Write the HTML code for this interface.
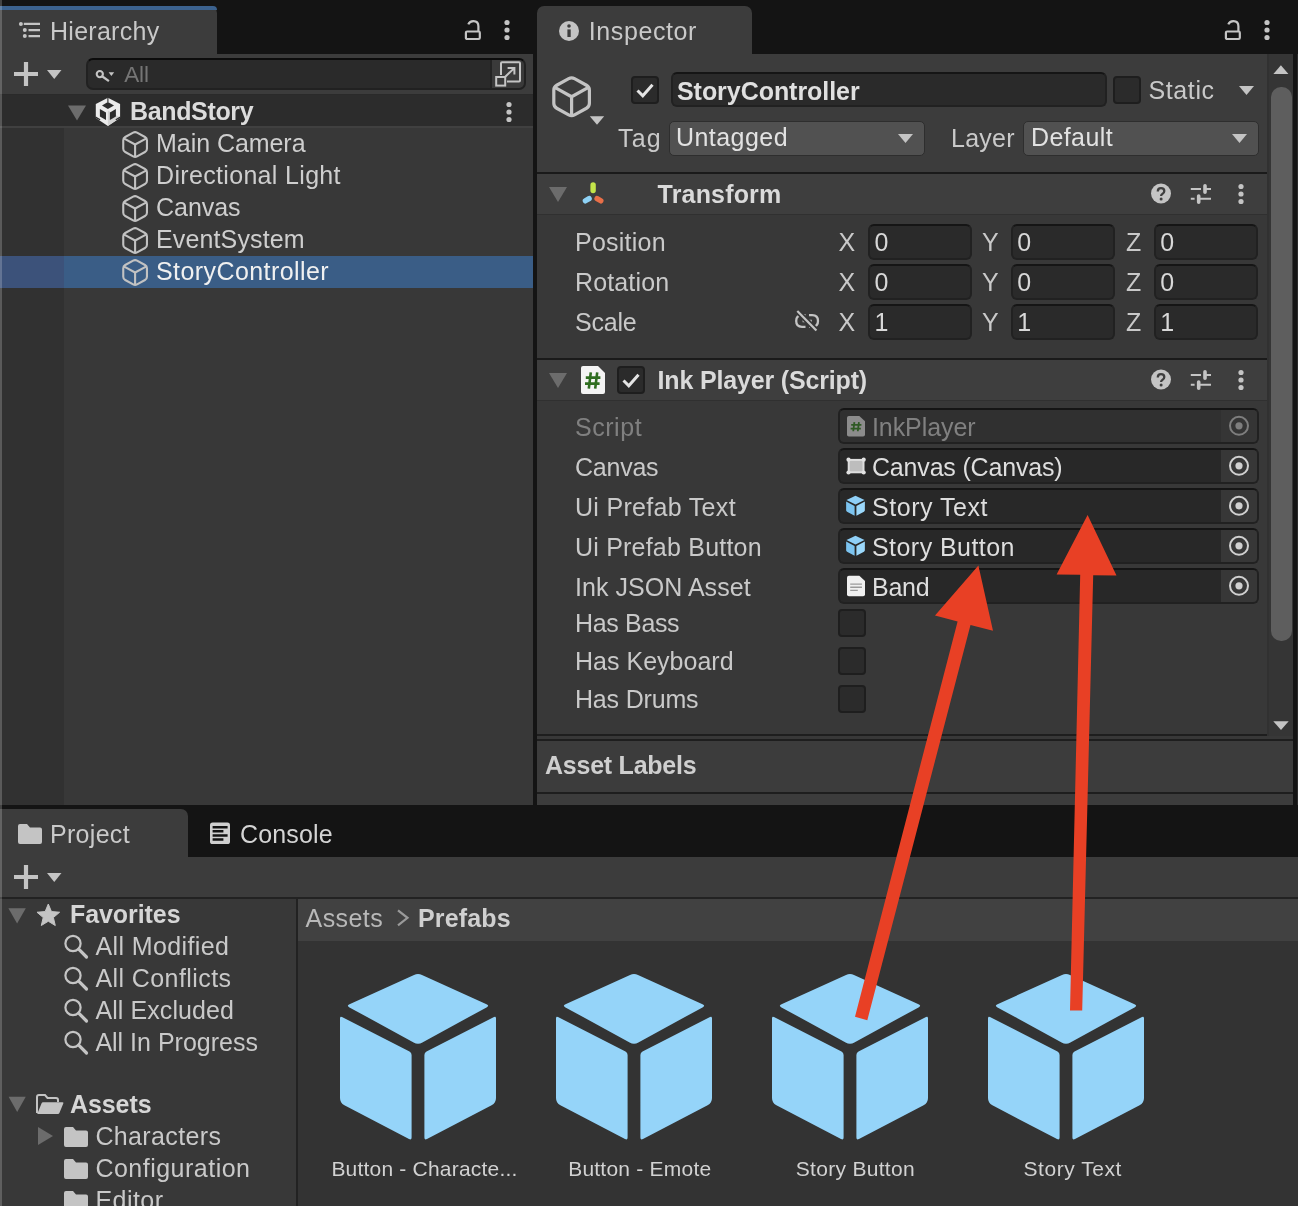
<!DOCTYPE html>
<html><head><meta charset="utf-8"><title>Unity</title>
<style>
html,body{margin:0;padding:0;}
body{width:1298px;height:1206px;overflow:hidden;background:#141414;position:relative;font-family:"Liberation Sans",sans-serif;}
.b{position:absolute;box-sizing:border-box;}
.t{position:absolute;white-space:nowrap;line-height:30px;height:30px;}
svg{overflow:visible;}
#root{position:absolute;left:0;top:0;width:1298px;height:1206px;overflow:hidden;will-change:transform;}
</style></head><body><div id="root">
<div class="b" style="left:0px;top:6px;width:217px;height:50px;background:#3c3c3c;border-top-right-radius:7px;"></div>
<div class="b" style="left:0px;top:6px;width:217px;height:4px;background:#3c628e;border-top-right-radius:7px;"></div>
<svg class="b" style="left:18px;top:21px;" width="23" height="19" viewBox="0 0 23 19"><g transform="translate(0 0)"><circle cx="2.9" cy="2.9" r="2" fill="#c4c4c4"/><circle cx="6.8" cy="9.1" r="2" fill="#c4c4c4"/><circle cx="6.8" cy="15.1" r="2" fill="#c4c4c4"/><path d="M5.8 2.9 H22 M10.5 9.1 H22 M10.5 15.1 H22" stroke="#c4c4c4" stroke-width="2.2"/></g></svg>
<div class="t" style="left:50.0px;top:15.9px;font-size:25px;letter-spacing:0.27px;color:#c9c9c9;">Hierarchy</div>
<svg class="b" style="left:464px;top:19px;" width="18" height="23" viewBox="0 0 18 23"><g transform="translate(0 0.5)"><rect x="1.9" y="12" width="13.9" height="7.5" rx="1.2" fill="none" stroke="#c4c4c4" stroke-width="2.2"/><path d="M4.3 4.9 Q5.6 1.6 9.4 1.6 Q14.4 1.6 14.4 6.8 L14.4 12" fill="none" stroke="#c4c4c4" stroke-width="2.2"/></g></svg>
<svg class="b" style="left:503px;top:18px;" width="8" height="24" viewBox="0 0 8 24"><g transform="translate(0 0.5)"><circle cx="4" cy="4" r="2.6" fill="#c4c4c4"/><circle cx="4" cy="11.5" r="2.6" fill="#c4c4c4"/><circle cx="4" cy="19" r="2.6" fill="#c4c4c4"/></g></svg>
<div class="b" style="left:0px;top:54px;width:533px;height:40px;background:#3c3c3c;"></div>
<div class="b" style="left:0px;top:94px;width:533px;height:1px;background:#2a2a2a;"></div>
<svg class="b" style="left:14px;top:62px;" width="24" height="24" viewBox="0 0 24 24"><g transform="translate(0 0)"><path d="M12 0 V24 M0 12 H24" stroke="#c4c4c4" stroke-width="4.2"/></g></svg>
<svg class="b" style="left:47px;top:70px;" width="15" height="9" viewBox="0 0 15 9"><g transform="translate(0 0)"><path d="M0 0 L14.5 0 L7.25 9 Z" fill="#c4c4c4"/></g></svg>
<div class="b" style="left:86px;top:58px;width:440px;height:32px;background:#2a2a2a;border:2px solid #212121;border-top-color:#0c0c0c;border-radius:7px;"></div>
<div class="b" style="left:490px;top:60px;width:34px;height:28px;background:#3a3a3a;border-left:2px solid #232323;border-radius:0 5px 5px 0;"></div>
<svg class="b" style="left:94px;top:67px;" width="22" height="16" viewBox="0 0 22 16"><g transform="translate(0 0)"><circle cx="5.8" cy="7.1" r="3.1" fill="none" stroke="#c4c4c4" stroke-width="2.1"/><path d="M8.1 9.3 L14.9 14.1" stroke="#c4c4c4" stroke-width="2.3"/><path d="M14.6 5.3 H20.2 L17.4 9 Z" fill="#c4c4c4"/></g></svg>
<div class="t" style="left:124.2px;top:59.8px;font-size:22.5px;letter-spacing:-0.10px;color:#757575;">All</div>
<svg class="b" style="left:495px;top:61px;" width="27" height="26" viewBox="0 0 27 26"><g transform="translate(0 0)"><path d="M6 14 V2.2 Q6 1.2 7 1.2 H24 Q25 1.2 25 2.2 V19.6 Q25 20.6 24 20.6 H12" fill="none" stroke="#c4c4c4" stroke-width="2"/><rect x="1.2" y="16" width="9" height="8.6" fill="none" stroke="#c4c4c4" stroke-width="2"/><path d="M10 16 L19 7.4 M12.6 7 H19.4 V13.6" fill="none" stroke="#c4c4c4" stroke-width="2"/></g></svg>
<div class="b" style="left:0px;top:95px;width:533px;height:31px;background:#2c2c2c;"></div>
<div class="b" style="left:0px;top:126px;width:533px;height:2px;background:#404040;"></div>
<div class="b" style="left:0px;top:128px;width:533px;height:677px;background:#383838;"></div>
<div class="b" style="left:0px;top:128px;width:64px;height:677px;background:#313131;"></div>
<div class="b" style="left:0px;top:256px;width:533px;height:32px;background:#3a5d86;"></div>
<div class="b" style="left:0px;top:256px;width:64px;height:32px;background:#3c527a;"></div>
<svg class="b" style="left:68px;top:105px;" width="18" height="16" viewBox="0 0 18 16"><g transform="translate(0 0.5)"><path d="M0 0 L18 0 L9 15 Z" fill="#6c6c6c"/></g></svg>
<svg class="b" style="left:505px;top:100px;" width="8" height="24" viewBox="0 0 8 24"><g transform="translate(0 0.5)"><circle cx="4" cy="4" r="2.6" fill="#c4c4c4"/><circle cx="4" cy="11.5" r="2.6" fill="#c4c4c4"/><circle cx="4" cy="19" r="2.6" fill="#c4c4c4"/></g></svg>
<svg class="b" style="left:95px;top:97px;" width="26" height="30" viewBox="0 0 26 30"><g transform="translate(0.5 0.5)"><path d="M12.4 0.3 L24.6 6.6 V20.5 L12.4 28.5 L0.3 20.5 V6.6 Z" fill="#ececec"/><path d="M12.4 13 L24.6 19.9 L12.4 28.5 Z" fill="#d4d4d4"/><path d="M12.4 4.4 L18.5 7.9 L12.4 11.5 L6.5 7.9 Z" fill="#2c2c2c"/><path d="M4.4 11.6 L10.5 15.1 V22.6 L4.4 19 Z" fill="#2c2c2c"/><path d="M20.4 11.6 L14.4 15.1 V22.6 L20.4 19 Z" fill="#2c2c2c"/><path d="M12.4 0 V4.6" stroke="#2c2c2c" stroke-width="1.1"/><path d="M0 19.6 L4.6 22.3 M24.9 19.6 L20.3 22.3" stroke="#2c2c2c" stroke-width="1.3"/></g></svg>
<div class="t" style="left:130.0px;top:95.9px;font-size:25px;font-weight:bold;letter-spacing:-0.35px;color:#dcdcdc;">BandStory</div>
<svg class="b" style="left:122px;top:130px;" width="27" height="29" viewBox="0 0 27 29"><g transform="translate(0 0.3)"><path d="M11.15 2.32 Q13.10 1.25 15.05 2.32 L23.00 6.66 Q24.95 7.72 24.95 9.95 L24.95 18.45 Q24.95 20.67 23.00 21.74 L15.05 26.08 Q13.10 27.15 11.15 26.08 L3.20 21.74 Q1.25 20.67 1.25 18.45 L1.25 9.95 Q1.25 7.72 3.20 6.66 Z M1.75 8.025 L13.1 14.2 L24.45 8.025 M13.1 14.2 L13.1 26.85" fill="none" stroke="#c2c2c2" stroke-width="2.1" stroke-linejoin="round"/></g></svg>
<div class="t" style="left:156.0px;top:128.3px;font-size:25px;letter-spacing:-0.05px;color:#cecece;">Main Camera</div>
<svg class="b" style="left:122px;top:162px;" width="27" height="29" viewBox="0 0 27 29"><g transform="translate(0 0.3)"><path d="M11.15 2.32 Q13.10 1.25 15.05 2.32 L23.00 6.66 Q24.95 7.72 24.95 9.95 L24.95 18.45 Q24.95 20.67 23.00 21.74 L15.05 26.08 Q13.10 27.15 11.15 26.08 L3.20 21.74 Q1.25 20.67 1.25 18.45 L1.25 9.95 Q1.25 7.72 3.20 6.66 Z M1.75 8.025 L13.1 14.2 L24.45 8.025 M13.1 14.2 L13.1 26.85" fill="none" stroke="#c2c2c2" stroke-width="2.1" stroke-linejoin="round"/></g></svg>
<div class="t" style="left:156.0px;top:160.3px;font-size:25px;letter-spacing:0.33px;color:#cecece;">Directional Light</div>
<svg class="b" style="left:122px;top:194px;" width="27" height="29" viewBox="0 0 27 29"><g transform="translate(0 0.3)"><path d="M11.15 2.32 Q13.10 1.25 15.05 2.32 L23.00 6.66 Q24.95 7.72 24.95 9.95 L24.95 18.45 Q24.95 20.67 23.00 21.74 L15.05 26.08 Q13.10 27.15 11.15 26.08 L3.20 21.74 Q1.25 20.67 1.25 18.45 L1.25 9.95 Q1.25 7.72 3.20 6.66 Z M1.75 8.025 L13.1 14.2 L24.45 8.025 M13.1 14.2 L13.1 26.85" fill="none" stroke="#c2c2c2" stroke-width="2.1" stroke-linejoin="round"/></g></svg>
<div class="t" style="left:156.0px;top:192.3px;font-size:25px;letter-spacing:-0.03px;color:#cecece;">Canvas</div>
<svg class="b" style="left:122px;top:226px;" width="27" height="29" viewBox="0 0 27 29"><g transform="translate(0 0.3)"><path d="M11.15 2.32 Q13.10 1.25 15.05 2.32 L23.00 6.66 Q24.95 7.72 24.95 9.95 L24.95 18.45 Q24.95 20.67 23.00 21.74 L15.05 26.08 Q13.10 27.15 11.15 26.08 L3.20 21.74 Q1.25 20.67 1.25 18.45 L1.25 9.95 Q1.25 7.72 3.20 6.66 Z M1.75 8.025 L13.1 14.2 L24.45 8.025 M13.1 14.2 L13.1 26.85" fill="none" stroke="#c2c2c2" stroke-width="2.1" stroke-linejoin="round"/></g></svg>
<div class="t" style="left:156.0px;top:224.3px;font-size:25px;letter-spacing:0.13px;color:#cecece;">EventSystem</div>
<svg class="b" style="left:122px;top:258px;" width="27" height="29" viewBox="0 0 27 29"><g transform="translate(0 0.3)"><path d="M11.15 2.32 Q13.10 1.25 15.05 2.32 L23.00 6.66 Q24.95 7.72 24.95 9.95 L24.95 18.45 Q24.95 20.67 23.00 21.74 L15.05 26.08 Q13.10 27.15 11.15 26.08 L3.20 21.74 Q1.25 20.67 1.25 18.45 L1.25 9.95 Q1.25 7.72 3.20 6.66 Z M1.75 8.025 L13.1 14.2 L24.45 8.025 M13.1 14.2 L13.1 26.85" fill="none" stroke="#c2c2c2" stroke-width="2.1" stroke-linejoin="round"/></g></svg>
<div class="t" style="left:156.0px;top:256.3px;font-size:25px;letter-spacing:0.42px;color:#f0f0f0;">StoryController</div>
<div class="b" style="left:537px;top:6px;width:215px;height:50px;background:#3c3c3c;border-top-left-radius:7px;border-top-right-radius:7px;"></div>
<svg class="b" style="left:559px;top:21px;" width="20" height="20" viewBox="0 0 20 20"><g transform="translate(0 0)"><circle cx="10" cy="10" r="10" fill="#c4c4c4"/><circle cx="10" cy="5" r="1.8" fill="#3c3c3c"/><rect x="8.4" y="8.4" width="3.3" height="7.6" fill="#3c3c3c"/></g></svg>
<div class="t" style="left:588.8px;top:15.9px;font-size:25px;letter-spacing:0.59px;color:#c9c9c9;">Inspector</div>
<svg class="b" style="left:1224px;top:19px;" width="18" height="23" viewBox="0 0 18 23"><g transform="translate(0 0.5)"><rect x="1.9" y="12" width="13.9" height="7.5" rx="1.2" fill="none" stroke="#c4c4c4" stroke-width="2.2"/><path d="M4.3 4.9 Q5.6 1.6 9.4 1.6 Q14.4 1.6 14.4 6.8 L14.4 12" fill="none" stroke="#c4c4c4" stroke-width="2.2"/></g></svg>
<svg class="b" style="left:1263px;top:18px;" width="8" height="24" viewBox="0 0 8 24"><g transform="translate(0 0.5)"><circle cx="4" cy="4" r="2.6" fill="#c4c4c4"/><circle cx="4" cy="11.5" r="2.6" fill="#c4c4c4"/><circle cx="4" cy="19" r="2.6" fill="#c4c4c4"/></g></svg>
<div class="b" style="left:537px;top:54px;width:756px;height:751px;background:#3c3c3c;"></div>
<div class="b" style="left:1267px;top:54px;width:26px;height:682px;background:#353535;"></div>
<div class="b" style="left:1267px;top:54px;width:2px;height:682px;background:#313131;"></div>
<div class="b" style="left:1297px;top:54px;width:1px;height:751px;background:#2b2b2b;"></div>
<svg class="b" style="left:1273px;top:65px;" width="16" height="10" viewBox="0 0 16 10"><g transform="translate(0.4 0.2)"><path d="M0 8.8 L15 8.8 L7.5 0 Z" fill="#c4c4c4"/></g></svg>
<div class="b" style="left:1271px;top:87px;width:21px;height:554px;background:#5e5e5e;border-radius:10px;"></div>
<svg class="b" style="left:1273px;top:721px;" width="16" height="10" viewBox="0 0 16 10"><g transform="translate(0.3 0.2)"><path d="M0 0 L15.4 0 L7.7 8.8 Z" fill="#c4c4c4"/></g></svg>
<svg class="b" style="left:552px;top:75px;" width="40" height="44" viewBox="0 0 40 44"><g transform="translate(0 0.2)"><path d="M16.69 3.42 Q19.60 1.80 22.51 3.42 L34.49 10.06 Q37.40 11.68 37.40 15.01 L37.40 28.09 Q37.40 31.43 34.49 33.04 L22.51 39.68 Q19.60 41.30 16.69 39.68 L4.71 33.04 Q1.80 31.43 1.80 28.09 L1.80 15.01 Q1.80 11.68 4.71 10.06 Z M2.3 11.975 L19.6 21.55 L36.9 11.975 M19.6 21.55 L19.6 41" fill="none" stroke="#c4c4c4" stroke-width="3.2" stroke-linejoin="round"/></g></svg>
<svg class="b" style="left:589px;top:116px;" width="16" height="9" viewBox="0 0 16 9"><g transform="translate(0.8 0.2)"><path d="M0 0 L14.4 0 L7.2 8.6 Z" fill="#c4c4c4"/></g></svg>
<div class="b" style="left:631px;top:76px;width:28px;height:28px;background:#2b2b2b;border:2px solid #1e1e1e;border-radius:4px;"></div>
<svg class="b" style="left:631px;top:76px;" width="28" height="28" viewBox="0 0 28 28"><g transform="translate(0 0)"><path d="M6.5 14.5 L11.8 19.8 L21.5 8.8" fill="none" stroke="#e4e4e4" stroke-width="3"/></g></svg>
<div class="b" style="left:671px;top:72.4px;width:436px;height:35px;background:#2a2a2a;border:2px solid #212121;border-top-color:#151515;border-radius:6px;"></div>
<div class="t" style="left:677.0px;top:76.3px;font-size:25px;font-weight:bold;letter-spacing:-0.05px;color:#e0e0e0;">StoryController</div>
<div class="b" style="left:1113px;top:76px;width:28px;height:28px;background:#2b2b2b;border:2px solid #1e1e1e;border-radius:4px;"></div>
<div class="t" style="left:1148.5px;top:75.3px;font-size:25px;letter-spacing:0.61px;color:#c9c9c9;">Static</div>
<svg class="b" style="left:1239px;top:86px;" width="15" height="9" viewBox="0 0 15 9"><g transform="translate(0 0)"><path d="M0 0 L15 0 L7.5 9 Z" fill="#c4c4c4"/></g></svg>
<div class="t" style="left:618.0px;top:123.3px;font-size:25px;letter-spacing:1.14px;color:#c9c9c9;">Tag</div>
<div class="b" style="left:669px;top:120.5px;width:256px;height:35.2px;background:#515151;border:1.5px solid #2e2e2e;border-radius:5px;"></div>
<svg class="b" style="left:898px;top:134px;" width="15" height="10" viewBox="0 0 15 10"><g transform="translate(0 0.1)"><path d="M0 0 L15 0 L7.5 9 Z" fill="#c4c4c4"/></g></svg>
<div class="t" style="left:676.0px;top:122.3px;font-size:25px;letter-spacing:0.45px;color:#e2e2e2;">Untagged</div>
<div class="t" style="left:951.0px;top:123.3px;font-size:25px;letter-spacing:0.26px;color:#c9c9c9;">Layer</div>
<div class="b" style="left:1023px;top:120.5px;width:236px;height:35.2px;background:#515151;border:1.5px solid #2e2e2e;border-radius:5px;"></div>
<svg class="b" style="left:1232px;top:134px;" width="15" height="10" viewBox="0 0 15 10"><g transform="translate(0 0.1)"><path d="M0 0 L15 0 L7.5 9 Z" fill="#c4c4c4"/></g></svg>
<div class="t" style="left:1031.0px;top:122.3px;font-size:25px;letter-spacing:0.40px;color:#e2e2e2;">Default</div>
<div class="b" style="left:537px;top:174px;width:730px;height:562px;background:#383838;"></div>
<div class="b" style="left:537px;top:172px;width:730px;height:2px;background:#1a1a1a;"></div>
<div class="b" style="left:537px;top:174px;width:730px;height:40px;background:#3e3e3e;"></div>
<div class="b" style="left:537px;top:214px;width:730px;height:1px;background:#303030;"></div>
<svg class="b" style="left:549px;top:187px;" width="18" height="15" viewBox="0 0 18 15"><g transform="translate(0 0)"><path d="M0 0 L18 0 L9 15 Z" fill="#6c6c6c"/></g></svg>
<div class="t" style="left:657.6px;top:179.3px;font-size:25px;font-weight:bold;letter-spacing:0.17px;color:#dadada;">Transform</div>
<svg class="b" style="left:1151px;top:183px;" width="20" height="21" viewBox="0 0 20 21"><g transform="translate(0 0.5)"><circle cx="10" cy="10" r="10" fill="#c4c4c4"/><path d="M6.8 7.9 Q6.8 4.6 10 4.6 Q13.3 4.6 13.3 7.6 Q13.3 9.3 11.6 10.2 Q10.1 11 10.1 12.6" fill="none" stroke="#3e3e3e" stroke-width="2.3"/><circle cx="10.1" cy="15.6" r="1.5" fill="#3e3e3e"/></g></svg>
<svg class="b" style="left:1190px;top:184px;" width="22" height="20" viewBox="0 0 22 20"><g transform="translate(0 0)"><path d="M0.8 5 H11 M15 5 H21 M0.8 14.8 H4.6 M8.7 14.8 H21" stroke="#c4c4c4" stroke-width="2" fill="none"/><path d="M15 1.8 V8.2 M8.7 12 V18.2" stroke="#c4c4c4" stroke-width="3.6" stroke-linecap="round" fill="none"/></g></svg>
<svg class="b" style="left:1237px;top:182px;" width="8" height="24" viewBox="0 0 8 24"><g transform="translate(0 0.5)"><circle cx="4" cy="4" r="2.6" fill="#c4c4c4"/><circle cx="4" cy="11.5" r="2.6" fill="#c4c4c4"/><circle cx="4" cy="19" r="2.6" fill="#c4c4c4"/></g></svg>
<svg class="b" style="left:580px;top:181px;" width="28" height="26" viewBox="0 0 28 26"><g transform="translate(0 0)"><path d="M13.1 3.9 V9.6" stroke="#c3e44a" stroke-width="5.4" stroke-linecap="round"/><path d="M9.1 17.6 L5.4 19.8" stroke="#8ed2f6" stroke-width="5.4" stroke-linecap="round"/><path d="M17.1 17.6 L20.8 19.8" stroke="#e96f48" stroke-width="5.4" stroke-linecap="round"/></g></svg>
<div class="t" style="left:575.0px;top:227.3px;font-size:25px;letter-spacing:0.24px;color:#c9c9c9;">Position</div>
<div class="t" style="left:838.5px;top:227.3px;font-size:25px;color:#c9c9c9;">X</div>
<div class="b" style="left:868px;top:224px;width:104px;height:36px;background:#2a2a2a;border:2px solid #212121;border-top-color:#151515;border-radius:6px;"></div>
<div class="t" style="left:874.5px;top:227.3px;font-size:25px;color:#d8d8d8;">0</div>
<div class="t" style="left:982.0px;top:227.3px;font-size:25px;color:#c9c9c9;">Y</div>
<div class="b" style="left:1010.8px;top:224px;width:104px;height:36px;background:#2a2a2a;border:2px solid #212121;border-top-color:#151515;border-radius:6px;"></div>
<div class="t" style="left:1017.3px;top:227.3px;font-size:25px;color:#d8d8d8;">0</div>
<div class="t" style="left:1126.0px;top:227.3px;font-size:25px;color:#c9c9c9;">Z</div>
<div class="b" style="left:1153.8px;top:224px;width:104px;height:36px;background:#2a2a2a;border:2px solid #212121;border-top-color:#151515;border-radius:6px;"></div>
<div class="t" style="left:1160.3px;top:227.3px;font-size:25px;color:#d8d8d8;">0</div>
<div class="t" style="left:575.0px;top:267.3px;font-size:25px;letter-spacing:0.14px;color:#c9c9c9;">Rotation</div>
<div class="t" style="left:838.5px;top:267.3px;font-size:25px;color:#c9c9c9;">X</div>
<div class="b" style="left:868px;top:264px;width:104px;height:36px;background:#2a2a2a;border:2px solid #212121;border-top-color:#151515;border-radius:6px;"></div>
<div class="t" style="left:874.5px;top:267.3px;font-size:25px;color:#d8d8d8;">0</div>
<div class="t" style="left:982.0px;top:267.3px;font-size:25px;color:#c9c9c9;">Y</div>
<div class="b" style="left:1010.8px;top:264px;width:104px;height:36px;background:#2a2a2a;border:2px solid #212121;border-top-color:#151515;border-radius:6px;"></div>
<div class="t" style="left:1017.3px;top:267.3px;font-size:25px;color:#d8d8d8;">0</div>
<div class="t" style="left:1126.0px;top:267.3px;font-size:25px;color:#c9c9c9;">Z</div>
<div class="b" style="left:1153.8px;top:264px;width:104px;height:36px;background:#2a2a2a;border:2px solid #212121;border-top-color:#151515;border-radius:6px;"></div>
<div class="t" style="left:1160.3px;top:267.3px;font-size:25px;color:#d8d8d8;">0</div>
<div class="t" style="left:575.0px;top:307.3px;font-size:25px;letter-spacing:-0.23px;color:#c9c9c9;">Scale</div>
<div class="t" style="left:838.5px;top:307.3px;font-size:25px;color:#c9c9c9;">X</div>
<div class="b" style="left:868px;top:304px;width:104px;height:36px;background:#2a2a2a;border:2px solid #212121;border-top-color:#151515;border-radius:6px;"></div>
<div class="t" style="left:874.5px;top:307.3px;font-size:25px;color:#d8d8d8;">1</div>
<div class="t" style="left:982.0px;top:307.3px;font-size:25px;color:#c9c9c9;">Y</div>
<div class="b" style="left:1010.8px;top:304px;width:104px;height:36px;background:#2a2a2a;border:2px solid #212121;border-top-color:#151515;border-radius:6px;"></div>
<div class="t" style="left:1017.3px;top:307.3px;font-size:25px;color:#d8d8d8;">1</div>
<div class="t" style="left:1126.0px;top:307.3px;font-size:25px;color:#c9c9c9;">Z</div>
<div class="b" style="left:1153.8px;top:304px;width:104px;height:36px;background:#2a2a2a;border:2px solid #212121;border-top-color:#151515;border-radius:6px;"></div>
<div class="t" style="left:1160.3px;top:307.3px;font-size:25px;color:#d8d8d8;">1</div>
<svg class="b" style="left:794px;top:310px;" width="27" height="24" viewBox="0 0 27 24"><g transform="translate(0 0)"><path d="M11.5 5.2 H8 Q2.2 5.2 2.2 11 Q2.2 16.8 8 16.8 H11.5 M15 5.2 H18.2 Q24 5.2 24 11 Q24 16.8 18.2 16.8 H15 M8.6 11 H17.8" fill="none" stroke="#c4c4c4" stroke-width="2.3"/><path d="M3.3 1 L22.4 20.5" stroke="#383838" stroke-width="5.4"/><path d="M3.3 1 L22.4 20.5" stroke="#c4c4c4" stroke-width="2.2"/></g></svg>
<div class="b" style="left:537px;top:358px;width:730px;height:2px;background:#1a1a1a;"></div>
<div class="b" style="left:537px;top:360px;width:730px;height:40px;background:#3e3e3e;"></div>
<div class="b" style="left:537px;top:400px;width:730px;height:1px;background:#303030;"></div>
<svg class="b" style="left:549px;top:373px;" width="18" height="15" viewBox="0 0 18 15"><g transform="translate(0 0)"><path d="M0 0 L18 0 L9 15 Z" fill="#6c6c6c"/></g></svg>
<div class="t" style="left:657.6px;top:365.3px;font-size:25px;font-weight:bold;letter-spacing:-0.17px;color:#dadada;">Ink Player (Script)</div>
<svg class="b" style="left:1151px;top:369px;" width="20" height="21" viewBox="0 0 20 21"><g transform="translate(0 0.5)"><circle cx="10" cy="10" r="10" fill="#c4c4c4"/><path d="M6.8 7.9 Q6.8 4.6 10 4.6 Q13.3 4.6 13.3 7.6 Q13.3 9.3 11.6 10.2 Q10.1 11 10.1 12.6" fill="none" stroke="#3e3e3e" stroke-width="2.3"/><circle cx="10.1" cy="15.6" r="1.5" fill="#3e3e3e"/></g></svg>
<svg class="b" style="left:1190px;top:370px;" width="22" height="20" viewBox="0 0 22 20"><g transform="translate(0 0)"><path d="M0.8 5 H11 M15 5 H21 M0.8 14.8 H4.6 M8.7 14.8 H21" stroke="#c4c4c4" stroke-width="2" fill="none"/><path d="M15 1.8 V8.2 M8.7 12 V18.2" stroke="#c4c4c4" stroke-width="3.6" stroke-linecap="round" fill="none"/></g></svg>
<svg class="b" style="left:1237px;top:368px;" width="8" height="24" viewBox="0 0 8 24"><g transform="translate(0 0.5)"><circle cx="4" cy="4" r="2.6" fill="#c4c4c4"/><circle cx="4" cy="11.5" r="2.6" fill="#c4c4c4"/><circle cx="4" cy="19" r="2.6" fill="#c4c4c4"/></g></svg>
<svg class="b" style="left:581px;top:366px;" width="24" height="28" viewBox="0 0 24 28"><g transform="translate(0 0)"><path d="M0 2 Q0 0 2 0 H17 L24 7 V26 Q24 28 22 28 H2 Q0 28 0 26 Z" fill="#f4f4f4"/><path d="M9.8 6.4 L7.8 22.6 M16.2 6.4 L14.2 22.6 M4.8 11.6 H19.4 M4 17.6 H18.6" stroke="#2f6d20" stroke-width="2.6" fill="none"/></g></svg>
<div class="b" style="left:617px;top:366px;width:28px;height:28px;background:#2b2b2b;border:2px solid #1e1e1e;border-radius:4px;"></div>
<svg class="b" style="left:617px;top:366px;" width="28" height="28" viewBox="0 0 28 28"><g transform="translate(0 0)"><path d="M6.5 14.5 L11.8 19.8 L21.5 8.8" fill="none" stroke="#e4e4e4" stroke-width="3"/></g></svg>
<div class="t" style="left:575.0px;top:411.6px;font-size:25px;letter-spacing:0.54px;color:#808080;">Script</div>
<div class="b" style="left:838px;top:408.3px;width:421px;height:36px;background:#303030;border:2px solid #212121;border-top-color:#151515;border-radius:6px;"></div>
<div class="b" style="left:1221px;top:410.3px;width:36px;height:32px;background:#353535;border-radius:0 4px 4px 0;"></div>
<svg class="b" style="left:1228px;top:414px;" width="22" height="23" viewBox="0 0 22 23"><g transform="translate(0 0.8)"><circle cx="11" cy="11" r="9" fill="none" stroke="#7e7e7e" stroke-width="2"/><circle cx="11" cy="11" r="3.6" fill="#7e7e7e"/></g></svg>
<div class="t" style="left:872.0px;top:411.6px;font-size:25px;letter-spacing:-0.08px;color:#808080;">InkPlayer</div>
<div class="t" style="left:575.0px;top:451.6px;font-size:25px;letter-spacing:-0.23px;color:#c9c9c9;">Canvas</div>
<div class="b" style="left:838px;top:448.3px;width:421px;height:36px;background:#282828;border:2px solid #212121;border-top-color:#151515;border-radius:6px;"></div>
<div class="b" style="left:1221px;top:450.3px;width:36px;height:32px;background:#373737;border-radius:0 4px 4px 0;"></div>
<svg class="b" style="left:1228px;top:454px;" width="22" height="23" viewBox="0 0 22 23"><g transform="translate(0 0.8)"><circle cx="11" cy="11" r="9" fill="none" stroke="#d0d0d0" stroke-width="2"/><circle cx="11" cy="11" r="3.6" fill="#d0d0d0"/></g></svg>
<div class="t" style="left:872.0px;top:451.6px;font-size:25px;letter-spacing:-0.18px;color:#dedede;">Canvas (Canvas)</div>
<div class="t" style="left:575.0px;top:491.6px;font-size:25px;letter-spacing:0.31px;color:#c9c9c9;">Ui Prefab Text</div>
<div class="b" style="left:838px;top:488.3px;width:421px;height:36px;background:#282828;border:2px solid #212121;border-top-color:#151515;border-radius:6px;"></div>
<div class="b" style="left:1221px;top:490.3px;width:36px;height:32px;background:#373737;border-radius:0 4px 4px 0;"></div>
<svg class="b" style="left:1228px;top:494px;" width="22" height="23" viewBox="0 0 22 23"><g transform="translate(0 0.8)"><circle cx="11" cy="11" r="9" fill="none" stroke="#d0d0d0" stroke-width="2"/><circle cx="11" cy="11" r="3.6" fill="#d0d0d0"/></g></svg>
<div class="t" style="left:872.0px;top:491.6px;font-size:25px;letter-spacing:0.54px;color:#dedede;">Story Text</div>
<div class="t" style="left:575.0px;top:531.6px;font-size:25px;letter-spacing:0.21px;color:#c9c9c9;">Ui Prefab Button</div>
<div class="b" style="left:838px;top:528.3px;width:421px;height:36px;background:#282828;border:2px solid #212121;border-top-color:#151515;border-radius:6px;"></div>
<div class="b" style="left:1221px;top:530.3px;width:36px;height:32px;background:#373737;border-radius:0 4px 4px 0;"></div>
<svg class="b" style="left:1228px;top:534px;" width="22" height="23" viewBox="0 0 22 23"><g transform="translate(0 0.8)"><circle cx="11" cy="11" r="9" fill="none" stroke="#d0d0d0" stroke-width="2"/><circle cx="11" cy="11" r="3.6" fill="#d0d0d0"/></g></svg>
<div class="t" style="left:872.0px;top:531.6px;font-size:25px;letter-spacing:0.45px;color:#dedede;">Story Button</div>
<div class="t" style="left:575.0px;top:571.6px;font-size:25px;letter-spacing:0.04px;color:#c9c9c9;">Ink JSON Asset</div>
<div class="b" style="left:838px;top:568.3px;width:421px;height:36px;background:#282828;border:2px solid #212121;border-top-color:#151515;border-radius:6px;"></div>
<div class="b" style="left:1221px;top:570.3px;width:36px;height:32px;background:#373737;border-radius:0 4px 4px 0;"></div>
<svg class="b" style="left:1228px;top:574px;" width="22" height="23" viewBox="0 0 22 23"><g transform="translate(0 0.8)"><circle cx="11" cy="11" r="9" fill="none" stroke="#d0d0d0" stroke-width="2"/><circle cx="11" cy="11" r="3.6" fill="#d0d0d0"/></g></svg>
<div class="t" style="left:872.0px;top:571.6px;font-size:25px;letter-spacing:-0.26px;color:#dedede;">Band</div>
<svg class="b" style="left:847px;top:416px;" width="18" height="21" viewBox="0 0 18 21"><g transform="translate(0 0) scale(0.94737 0.88696)"><path d="M0 2 Q0 0 2 0 H13 L19 6 V21 Q19 23 17 23 H2 Q0 23 0 21 Z" fill="#8c8c8c"/><path d="M7.8 6.8 L6.6 17.2 M12.6 6.8 L11.4 17.2 M4.4 10 H15.2 M3.8 14.2 H14.6" stroke="#2f5a24" stroke-width="1.9" fill="none"/></g></svg>
<svg class="b" style="left:845px;top:455px;" width="23" height="22" viewBox="0 0 23 22"><g transform="translate(0 0.3)"><rect x="3.7" y="4.6" width="14.8" height="12.4" fill="#bdbdbd" stroke="#dedede" stroke-width="2"/><circle cx="3.5" cy="4.4" r="2.1" fill="#e2e2e2"/><circle cx="18.7" cy="4.4" r="2.1" fill="#e2e2e2"/><circle cx="3.5" cy="17.2" r="2.1" fill="#e2e2e2"/><circle cx="18.7" cy="17.2" r="2.1" fill="#e2e2e2"/></g></svg>
<svg class="b" style="left:845px;top:495px;" width="21" height="22" viewBox="0 0 21 22"><g transform="translate(0.6 0.2) scale(0.9 0.91304)"><path d="M11 0.5 L21 5.3 L11 10.3 L1 5.3 Z" fill="#8fd0f8"/><path d="M0.6 7 L10 11.8 V22.4 L1.6 18.2 Q0.6 17.7 0.6 16.6 Z" fill="#7cc4f0"/><path d="M21.4 7 L12 11.8 V22.4 L20.4 18.2 Q21.4 17.7 21.4 16.6 Z" fill="#9bd8fb"/></g></svg>
<svg class="b" style="left:845px;top:535px;" width="21" height="22" viewBox="0 0 21 22"><g transform="translate(0.6 0.2) scale(0.9 0.91304)"><path d="M11 0.5 L21 5.3 L11 10.3 L1 5.3 Z" fill="#8fd0f8"/><path d="M0.6 7 L10 11.8 V22.4 L1.6 18.2 Q0.6 17.7 0.6 16.6 Z" fill="#7cc4f0"/><path d="M21.4 7 L12 11.8 V22.4 L20.4 18.2 Q21.4 17.7 21.4 16.6 Z" fill="#9bd8fb"/></g></svg>
<svg class="b" style="left:847px;top:575px;" width="18" height="22" viewBox="0 0 18 22"><g transform="translate(0 0.8) scale(0.94737 0.88696)"><path d="M0 2 Q0 0 2 0 H13 L19 6 V21 Q19 23 17 23 H2 Q0 23 0 21 Z" fill="#f0f0f0"/><path d="M3.4 9.4 H15.8 M3.4 12.9 H15.8 M3.4 16.4 H11.4" stroke="#9a9a9a" stroke-width="1.5" fill="none"/></g></svg>
<div class="t" style="left:575.0px;top:608.3px;font-size:25px;letter-spacing:-0.34px;color:#c9c9c9;">Has Bass</div>
<div class="b" style="left:838px;top:609px;width:28px;height:28px;background:#2b2b2b;border:2px solid #1e1e1e;border-radius:4px;"></div>
<div class="t" style="left:575.0px;top:646.3px;font-size:25px;letter-spacing:0.01px;color:#c9c9c9;">Has Keyboard</div>
<div class="b" style="left:838px;top:647px;width:28px;height:28px;background:#2b2b2b;border:2px solid #1e1e1e;border-radius:4px;"></div>
<div class="t" style="left:575.0px;top:684.3px;font-size:25px;letter-spacing:-0.18px;color:#c9c9c9;">Has Drums</div>
<div class="b" style="left:838px;top:685px;width:28px;height:28px;background:#2b2b2b;border:2px solid #1e1e1e;border-radius:4px;"></div>
<div class="b" style="left:537px;top:734px;width:730px;height:2px;background:#1e1e1e;"></div>
<div class="b" style="left:537px;top:736px;width:756px;height:3px;background:#383838;"></div>
<div class="b" style="left:537px;top:738.5px;width:756px;height:2px;background:#1e1e1e;"></div>
<div class="b" style="left:537px;top:740.5px;width:756px;height:51px;background:#3c3c3c;"></div>
<div class="b" style="left:537px;top:791.5px;width:756px;height:2px;background:#1e1e1e;"></div>
<div class="b" style="left:537px;top:793.5px;width:756px;height:11.5px;background:#3c3c3c;"></div>
<div class="t" style="left:545.0px;top:750.3px;font-size:25px;font-weight:bold;letter-spacing:-0.24px;color:#cfcfcf;">Asset Labels</div>
<div class="b" style="left:0px;top:808.5px;width:188px;height:50px;background:#3c3c3c;border-top-right-radius:7px;"></div>
<svg class="b" style="left:18px;top:824px;" width="24" height="20" viewBox="0 0 24 20"><g transform="translate(0 0)"><path d="M0 2 Q0 0 2 0 H9 L12 3.5 H22 Q24 3.5 24 5.5 V18 Q24 20 22 20 H2 Q0 20 0 18 Z" fill="#c4c4c4"/></g></svg>
<div class="t" style="left:50.0px;top:819.0px;font-size:25px;letter-spacing:0.30px;color:#c9c9c9;">Project</div>
<svg class="b" style="left:210px;top:822px;" width="20" height="23" viewBox="0 0 20 23"><g transform="translate(0 0.6)"><rect x="0" y="0" width="20" height="21.4" rx="2.6" fill="#cfcfcf"/><path d="M2.6 4.6 H17.6 M2.6 8.7 H13.4 M2.6 12.8 H17.6 M2.6 16.9 H13.4" stroke="#121212" stroke-width="2.5"/></g></svg>
<div class="t" style="left:240.0px;top:819.0px;font-size:25px;letter-spacing:0.15px;color:#d4d4d4;">Console</div>
<div class="b" style="left:0px;top:857px;width:1298px;height:40px;background:#3c3c3c;"></div>
<svg class="b" style="left:14px;top:865px;" width="24" height="24" viewBox="0 0 24 24"><g transform="translate(0 0)"><path d="M12 0 V24 M0 12 H24" stroke="#c4c4c4" stroke-width="4.2"/></g></svg>
<svg class="b" style="left:47px;top:873px;" width="15" height="9" viewBox="0 0 15 9"><g transform="translate(0 0)"><path d="M0 0 L14.5 0 L7.25 9 Z" fill="#c4c4c4"/></g></svg>
<div class="b" style="left:0px;top:897px;width:1298px;height:2px;background:#222222;"></div>
<div class="b" style="left:0px;top:899px;width:295.7px;height:307px;background:#383838;"></div>
<div class="b" style="left:295.7px;top:899px;width:2.3px;height:307px;background:#222222;"></div>
<div class="b" style="left:298px;top:899px;width:1000px;height:41.5px;background:#414141;"></div>
<div class="b" style="left:298px;top:940.5px;width:1000px;height:266px;background:#333333;"></div>
<div class="t" style="left:305.6px;top:902.9px;font-size:25px;letter-spacing:0.41px;color:#b8b8b8;">Assets</div>
<svg class="b" style="left:396px;top:908px;" width="14" height="20" viewBox="0 0 14 20"><g transform="translate(0 0.3)"><path d="M2 2 L11.5 9.5 L2 17" fill="none" stroke="#9a9a9a" stroke-width="2.2"/></g></svg>
<div class="t" style="left:418.0px;top:902.9px;font-size:25px;font-weight:bold;letter-spacing:0.15px;color:#d0d0d0;">Prefabs</div>
<svg class="b" style="left:8px;top:908px;" width="18" height="16" viewBox="0 0 18 16"><g transform="translate(0.4 0.2)"><path d="M0 0 L17.4 0 L8.7 15.2 Z" fill="#6c6c6c"/></g></svg>
<svg class="b" style="left:36px;top:903px;" width="25" height="25" viewBox="0 0 25 25"><g transform="translate(0.4 0.4)"><polygon points="11.90,0.60 15.05,8.17 23.22,8.82 16.99,14.15 18.89,22.13 11.90,17.86 4.91,22.13 6.81,14.15 0.58,8.82 8.75,8.17" fill="#c4c4c4" stroke="#c4c4c4" stroke-width="1" stroke-linejoin="round"/></g></svg>
<div class="t" style="left:70.0px;top:899.3px;font-size:25px;font-weight:bold;letter-spacing:-0.07px;color:#d6d6d6;">Favorites</div>
<svg class="b" style="left:63px;top:934px;" width="26" height="25" viewBox="0 0 26 25"><g transform="translate(0.5 0)"><circle cx="9.5" cy="9.5" r="7.6" fill="none" stroke="#c4c4c4" stroke-width="2.2"/><path d="M15.2 15.2 L23 23" stroke="#c4c4c4" stroke-width="3.2" stroke-linecap="round"/></g></svg>
<div class="t" style="left:95.4px;top:931.3px;font-size:25px;letter-spacing:0.40px;color:#c9c9c9;">All Modified</div>
<svg class="b" style="left:63px;top:966px;" width="26" height="25" viewBox="0 0 26 25"><g transform="translate(0.5 0)"><circle cx="9.5" cy="9.5" r="7.6" fill="none" stroke="#c4c4c4" stroke-width="2.2"/><path d="M15.2 15.2 L23 23" stroke="#c4c4c4" stroke-width="3.2" stroke-linecap="round"/></g></svg>
<div class="t" style="left:95.4px;top:963.3px;font-size:25px;letter-spacing:0.42px;color:#c9c9c9;">All Conflicts</div>
<svg class="b" style="left:63px;top:998px;" width="26" height="25" viewBox="0 0 26 25"><g transform="translate(0.5 0)"><circle cx="9.5" cy="9.5" r="7.6" fill="none" stroke="#c4c4c4" stroke-width="2.2"/><path d="M15.2 15.2 L23 23" stroke="#c4c4c4" stroke-width="3.2" stroke-linecap="round"/></g></svg>
<div class="t" style="left:95.4px;top:995.3px;font-size:25px;letter-spacing:0.09px;color:#c9c9c9;">All Excluded</div>
<svg class="b" style="left:63px;top:1030px;" width="26" height="25" viewBox="0 0 26 25"><g transform="translate(0.5 0)"><circle cx="9.5" cy="9.5" r="7.6" fill="none" stroke="#c4c4c4" stroke-width="2.2"/><path d="M15.2 15.2 L23 23" stroke="#c4c4c4" stroke-width="3.2" stroke-linecap="round"/></g></svg>
<div class="t" style="left:95.4px;top:1027.3px;font-size:25px;letter-spacing:0.00px;color:#c9c9c9;">All In Progress</div>
<svg class="b" style="left:8px;top:1096px;" width="18" height="16" viewBox="0 0 18 16"><g transform="translate(0.6 0.8)"><path d="M0 0 L17.2 0 L8.6 15.2 Z" fill="#6c6c6c"/></g></svg>
<svg class="b" style="left:36px;top:1094px;" width="28" height="21" viewBox="0 0 28 21"><g transform="translate(0 0)"><path d="M1 19 V3 Q1 1 3 1 H9 L11.5 4 H20 Q22 4 22 6 V8" fill="none" stroke="#c4c4c4" stroke-width="2"/><path d="M1.2 20 L5.6 9.2 Q6 8.2 7 8.2 H26.5 Q27.8 8.2 27.3 9.4 L23.4 19 Q23 20 22 20 Z" fill="#c4c4c4"/></g></svg>
<div class="t" style="left:70.0px;top:1089.3px;font-size:25px;font-weight:bold;letter-spacing:-0.08px;color:#d6d6d6;">Assets</div>
<svg class="b" style="left:38px;top:1127px;" width="15" height="18" viewBox="0 0 15 18"><g transform="translate(0 0)"><path d="M0 0 L15 9 L0 18 Z" fill="#6c6c6c"/></g></svg>
<svg class="b" style="left:64px;top:1127px;" width="24" height="20" viewBox="0 0 24 20"><g transform="translate(0 0)"><path d="M0 2 Q0 0 2 0 H9 L12 3.5 H22 Q24 3.5 24 5.5 V18 Q24 20 22 20 H2 Q0 20 0 18 Z" fill="#c4c4c4"/></g></svg>
<div class="t" style="left:95.4px;top:1121.3px;font-size:25px;letter-spacing:0.37px;color:#c9c9c9;">Characters</div>
<svg class="b" style="left:64px;top:1159px;" width="24" height="20" viewBox="0 0 24 20"><g transform="translate(0 0)"><path d="M0 2 Q0 0 2 0 H9 L12 3.5 H22 Q24 3.5 24 5.5 V18 Q24 20 22 20 H2 Q0 20 0 18 Z" fill="#c4c4c4"/></g></svg>
<div class="t" style="left:95.4px;top:1153.3px;font-size:25px;letter-spacing:0.49px;color:#c9c9c9;">Configuration</div>
<svg class="b" style="left:64px;top:1191px;" width="24" height="20" viewBox="0 0 24 20"><g transform="translate(0 0)"><path d="M0 2 Q0 0 2 0 H9 L12 3.5 H22 Q24 3.5 24 5.5 V18 Q24 20 22 20 H2 Q0 20 0 18 Z" fill="#c4c4c4"/></g></svg>
<div class="t" style="left:95.4px;top:1185.3px;font-size:25px;letter-spacing:0.46px;color:#c9c9c9;">Editor</div>
<svg class="b" style="left:340px;top:974px;" width="156" height="166" viewBox="0 0 156 166"><g transform="translate(0 0)"><path d="M74 1 Q78 -1 82 1 L146.5 30.2 Q149.8 31.7 146.5 33.4 L82.4 68.4 Q78 71 73.6 68.4 L9.5 33.4 Q6.2 31.7 9.5 30.2 Z" fill="#95d4f9"/><path d="M0 44.2 Q0 42 2 43 L69.5 77.6 Q71.6 78.7 71.6 81 V163.6 Q71.6 166.4 69 165.1 L4.4 131.3 Q0 129 0 124 Z" fill="#95d4f9"/><path d="M156 44.2 Q156 42 154 43 L86.5 77.6 Q84.4 78.7 84.4 81 V163.6 Q84.4 166.4 87 165.1 L151.6 131.3 Q156 129 156 124 Z" fill="#95d4f9"/></g></svg>
<svg class="b" style="left:556px;top:974px;" width="156" height="166" viewBox="0 0 156 166"><g transform="translate(0 0)"><path d="M74 1 Q78 -1 82 1 L146.5 30.2 Q149.8 31.7 146.5 33.4 L82.4 68.4 Q78 71 73.6 68.4 L9.5 33.4 Q6.2 31.7 9.5 30.2 Z" fill="#95d4f9"/><path d="M0 44.2 Q0 42 2 43 L69.5 77.6 Q71.6 78.7 71.6 81 V163.6 Q71.6 166.4 69 165.1 L4.4 131.3 Q0 129 0 124 Z" fill="#95d4f9"/><path d="M156 44.2 Q156 42 154 43 L86.5 77.6 Q84.4 78.7 84.4 81 V163.6 Q84.4 166.4 87 165.1 L151.6 131.3 Q156 129 156 124 Z" fill="#95d4f9"/></g></svg>
<svg class="b" style="left:772px;top:974px;" width="156" height="166" viewBox="0 0 156 166"><g transform="translate(0 0)"><path d="M74 1 Q78 -1 82 1 L146.5 30.2 Q149.8 31.7 146.5 33.4 L82.4 68.4 Q78 71 73.6 68.4 L9.5 33.4 Q6.2 31.7 9.5 30.2 Z" fill="#95d4f9"/><path d="M0 44.2 Q0 42 2 43 L69.5 77.6 Q71.6 78.7 71.6 81 V163.6 Q71.6 166.4 69 165.1 L4.4 131.3 Q0 129 0 124 Z" fill="#95d4f9"/><path d="M156 44.2 Q156 42 154 43 L86.5 77.6 Q84.4 78.7 84.4 81 V163.6 Q84.4 166.4 87 165.1 L151.6 131.3 Q156 129 156 124 Z" fill="#95d4f9"/></g></svg>
<svg class="b" style="left:988px;top:974px;" width="156" height="166" viewBox="0 0 156 166"><g transform="translate(0 0)"><path d="M74 1 Q78 -1 82 1 L146.5 30.2 Q149.8 31.7 146.5 33.4 L82.4 68.4 Q78 71 73.6 68.4 L9.5 33.4 Q6.2 31.7 9.5 30.2 Z" fill="#95d4f9"/><path d="M0 44.2 Q0 42 2 43 L69.5 77.6 Q71.6 78.7 71.6 81 V163.6 Q71.6 166.4 69 165.1 L4.4 131.3 Q0 129 0 124 Z" fill="#95d4f9"/><path d="M156 44.2 Q156 42 154 43 L86.5 77.6 Q84.4 78.7 84.4 81 V163.6 Q84.4 166.4 87 165.1 L151.6 131.3 Q156 129 156 124 Z" fill="#95d4f9"/></g></svg>
<div class="t" style="left:331.4px;top:1154.2px;font-size:21px;letter-spacing:0.20px;color:#d2d2d2;">Button - Characte...</div>
<div class="t" style="left:568.2px;top:1154.2px;font-size:21px;letter-spacing:0.22px;color:#d2d2d2;">Button - Emote</div>
<div class="t" style="left:795.8px;top:1154.2px;font-size:21px;letter-spacing:0.30px;color:#d2d2d2;">Story Button</div>
<div class="t" style="left:1023.5px;top:1154.2px;font-size:21px;letter-spacing:0.54px;color:#d2d2d2;">Story Text</div>
<svg class="b" style="left:0;top:0" width="1298" height="1206" viewBox="0 0 1298 1206"><path d="M1070 1010.5 L1082.2 1010.5 L1093.2 575.2 L1116.5 575.6 L1087.6 515 L1056.6 574.4 L1080.2 574.8 Z" fill="#e84025"/><path d="M855.0 1016.7 L867.3 1020.3 L970.5 625 L993 630.8 L978.4 565.6 L935 615.6 L957.6 621.4 Z" fill="#e84025"/></svg>
<div class="b" style="left:0px;top:0px;width:2px;height:1206px;background:rgba(255,255,255,0.2);"></div>
</div></body></html>
